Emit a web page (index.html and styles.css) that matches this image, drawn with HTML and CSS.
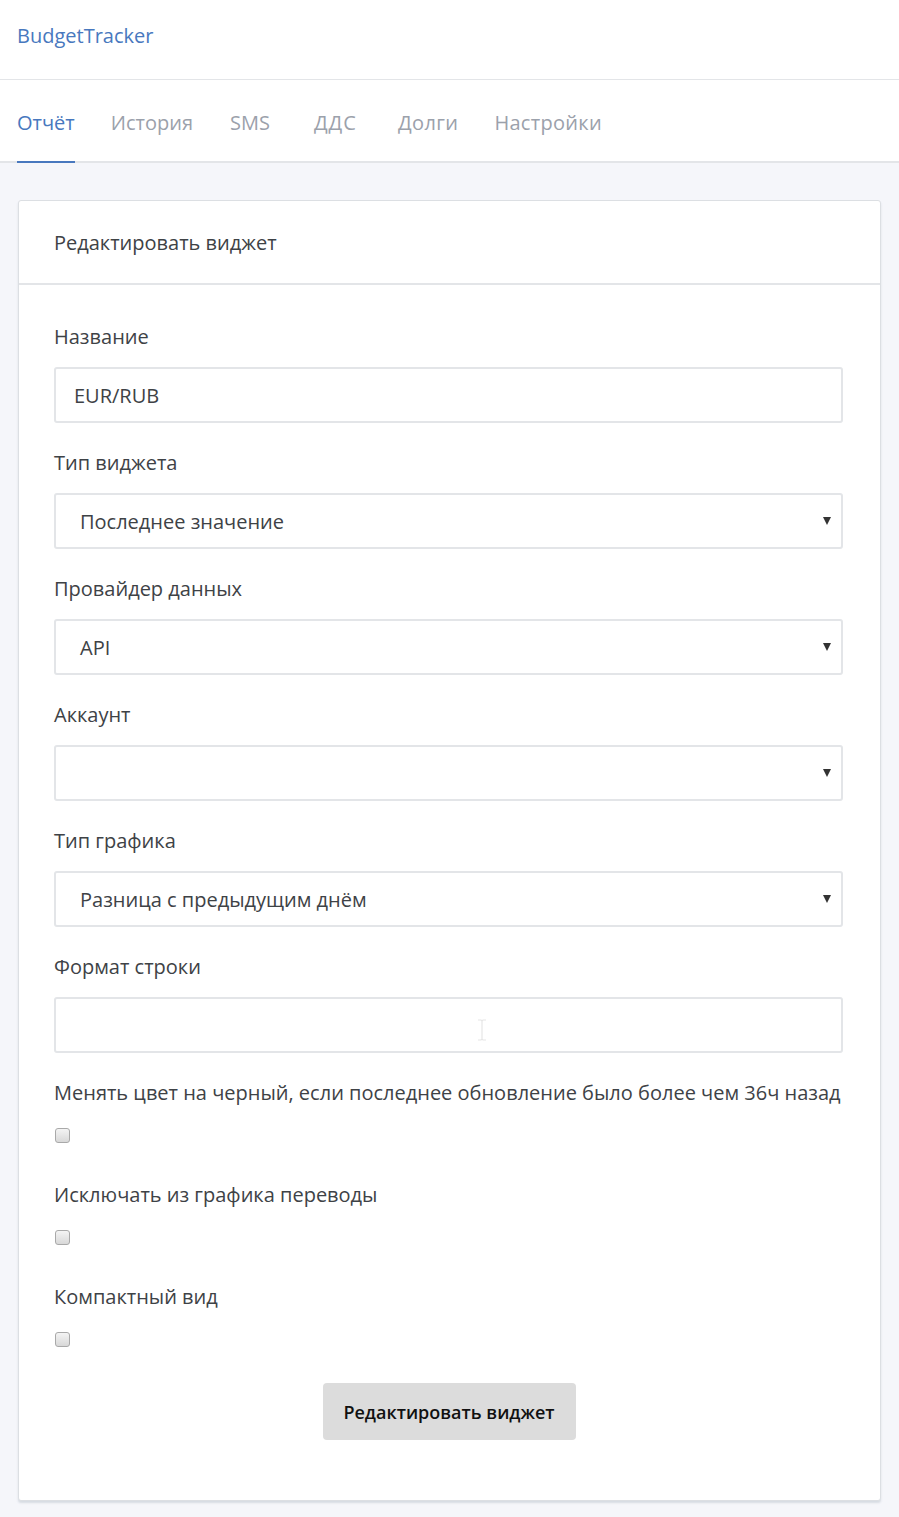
FILE: index.html
```html
<!DOCTYPE html>
<html lang="ru">
<head>
<meta charset="utf-8">
<title>BudgetTracker</title>
<link rel="stylesheet" href="styles.css">
</head>
<body>
<header class="topbar">
  <a class="brand" href="#">BudgetTracker</a>
</header>
<nav class="tabs">
  <a class="tab active" href="#">Отчёт</a>
  <a class="tab" href="#">История</a>
  <a class="tab tab-wide" href="#">SMS</a>
  <a class="tab tab-wide-sm" href="#">ДДС</a>
  <a class="tab tab-wide-xs" href="#">Долги</a>
  <a class="tab tab-spaced" href="#">Настройки</a>
</nav>
<main class="page">
  <section class="card">
    <div class="card-header">Редактировать виджет</div>
    <form class="card-body">
      <div class="group">
        <label class="label">Название</label>
        <div class="input">EUR/RUB</div>
      </div>
      <div class="group">
        <label class="label">Тип виджета</label>
        <div class="select">Последнее значение<span class="caret"></span></div>
      </div>
      <div class="group">
        <label class="label">Провайдер данных</label>
        <div class="select">API<span class="caret"></span></div>
      </div>
      <div class="group">
        <label class="label">Аккаунт</label>
        <div class="select"><span class="caret"></span></div>
      </div>
      <div class="group">
        <label class="label">Тип графика</label>
        <div class="select">Разница с предыдущим днём<span class="caret"></span></div>
      </div>
      <div class="group">
        <label class="label">Формат строки</label>
        <div class="input">
          <svg class="ibeam" width="12" height="22" viewBox="0 0 12 22"><path d="M2 1h3l1 1 1-1h3M6 2v18M2 21h3l1-1 1 1h3" fill="none" stroke="#e6e6e6" stroke-width="1.2"/></svg>
        </div>
      </div>
      <div class="check-group">
        <label class="label">Менять цвет на черный, если последнее обновление было более чем 36ч назад</label>
        <span class="checkbox"></span>
      </div>
      <div class="check-group">
        <label class="label">Исключать из графика переводы</label>
        <span class="checkbox"></span>
      </div>
      <div class="check-group">
        <label class="label">Компактный вид</label>
        <span class="checkbox"></span>
      </div>
      <div class="actions">
        <button type="button" class="btn">Редактировать виджет</button>
      </div>
    </form>
  </section>
</main>
</body>
</html>
```
FILE: styles.css
```css
* { box-sizing: border-box; }
html, body { margin: 0; padding: 0; }
body {
  background: #f5f6fa;
  font-family: "Open Sans", "Noto Sans", sans-serif;
  color: #3e4246;
  width: 899px;
}
.topbar {
  background: #fff;
  height: 80px;
  border-bottom: 1px solid #e3e5e8;
  display: flex;
  align-items: center;
  padding: 0 17px 8px;
}
.brand {
  color: #4878be;
  text-decoration: none;
  font-size: 20px;
}
.tabs {
  background: #fff;
  height: 83px;
  border-bottom: 2px solid #e3e5e8;
  display: flex;
  gap: 36px;
  padding: 0 17px;
}
.tab {
  color: #9ba1ab;
  text-decoration: none;
  font-size: 20px;
  display: flex;
  align-items: center;
  margin-bottom: -2px;
  border-bottom: 2px solid transparent;
  padding-top: 3px;
}
.tab-wide { margin-left: 1px; margin-right: 8px; }
.tab-wide-sm { letter-spacing: 1px; margin-right: 5px; }
.tab-wide-xs { letter-spacing: 0.4px; }
.tab-spaced { letter-spacing: 0.3px; }
.tab.active {
  color: #4878be;
  border-bottom-color: #4878be;
}
.page {
  padding: 37px 18px 18px 18px;
}
.card {
  background: #fff;
  width: 863px;
  border: 1px solid #dcdfe3;
  border-radius: 3px;
  box-shadow: 0 2px 2px rgba(180, 188, 200, 0.45);
}
.card-header {
  height: 84px;
  border-bottom: 2px solid #e3e5e8;
  padding: 0 35px;
  display: flex;
  align-items: center;
  font-size: 20px;
  color: #3e4246;
}
.card-body {
  padding: 38px 36px 60px 35px;
  display: flex;
  flex-direction: column;
}
.group {
  display: flex;
  flex-direction: column;
  gap: 16px;
  margin-bottom: 26px;
}
.label {
  font-size: 20px;
  line-height: 28px;
  color: #3e4246;
}
.input, .select {
  height: 56px;
  width: 789px;
  border: 2px solid #e3e5e8;
  border-radius: 3px;
  display: flex;
  align-items: center;
  font-size: 20px;
  color: #3e4246;
  padding: 0 18px;
  position: relative;
}
.select { padding-left: 24px; }
.caret {
  position: absolute;
  right: 10px;
  top: 22px;
  width: 0;
  height: 0;
  border-left: 4px solid transparent;
  border-right: 4px solid transparent;
  border-top: 8px solid #333;
}
.ibeam {
  position: absolute;
  left: 420px;
  top: 20px;
}
.check-group {
  display: flex;
  flex-direction: column;
  align-items: flex-start;
  gap: 21px;
  margin-bottom: 38px;
}
.checkbox {
  width: 15px;
  height: 15px;
  margin-left: 1px;
  border: 1px solid #a9a9a9;
  border-radius: 3px;
  background: linear-gradient(#f4f4f4, #d8d8d8);
}
.actions {
  display: flex;
  justify-content: center;
  margin-top: -2px;
}
.btn {
  width: 253px;
  height: 57px;
  background: #dcdcdc;
  border: none;
  border-radius: 4px;
  font-family: "Open Sans", sans-serif;
  font-weight: 600;
  font-size: 18px;
  color: #111;
}
```
